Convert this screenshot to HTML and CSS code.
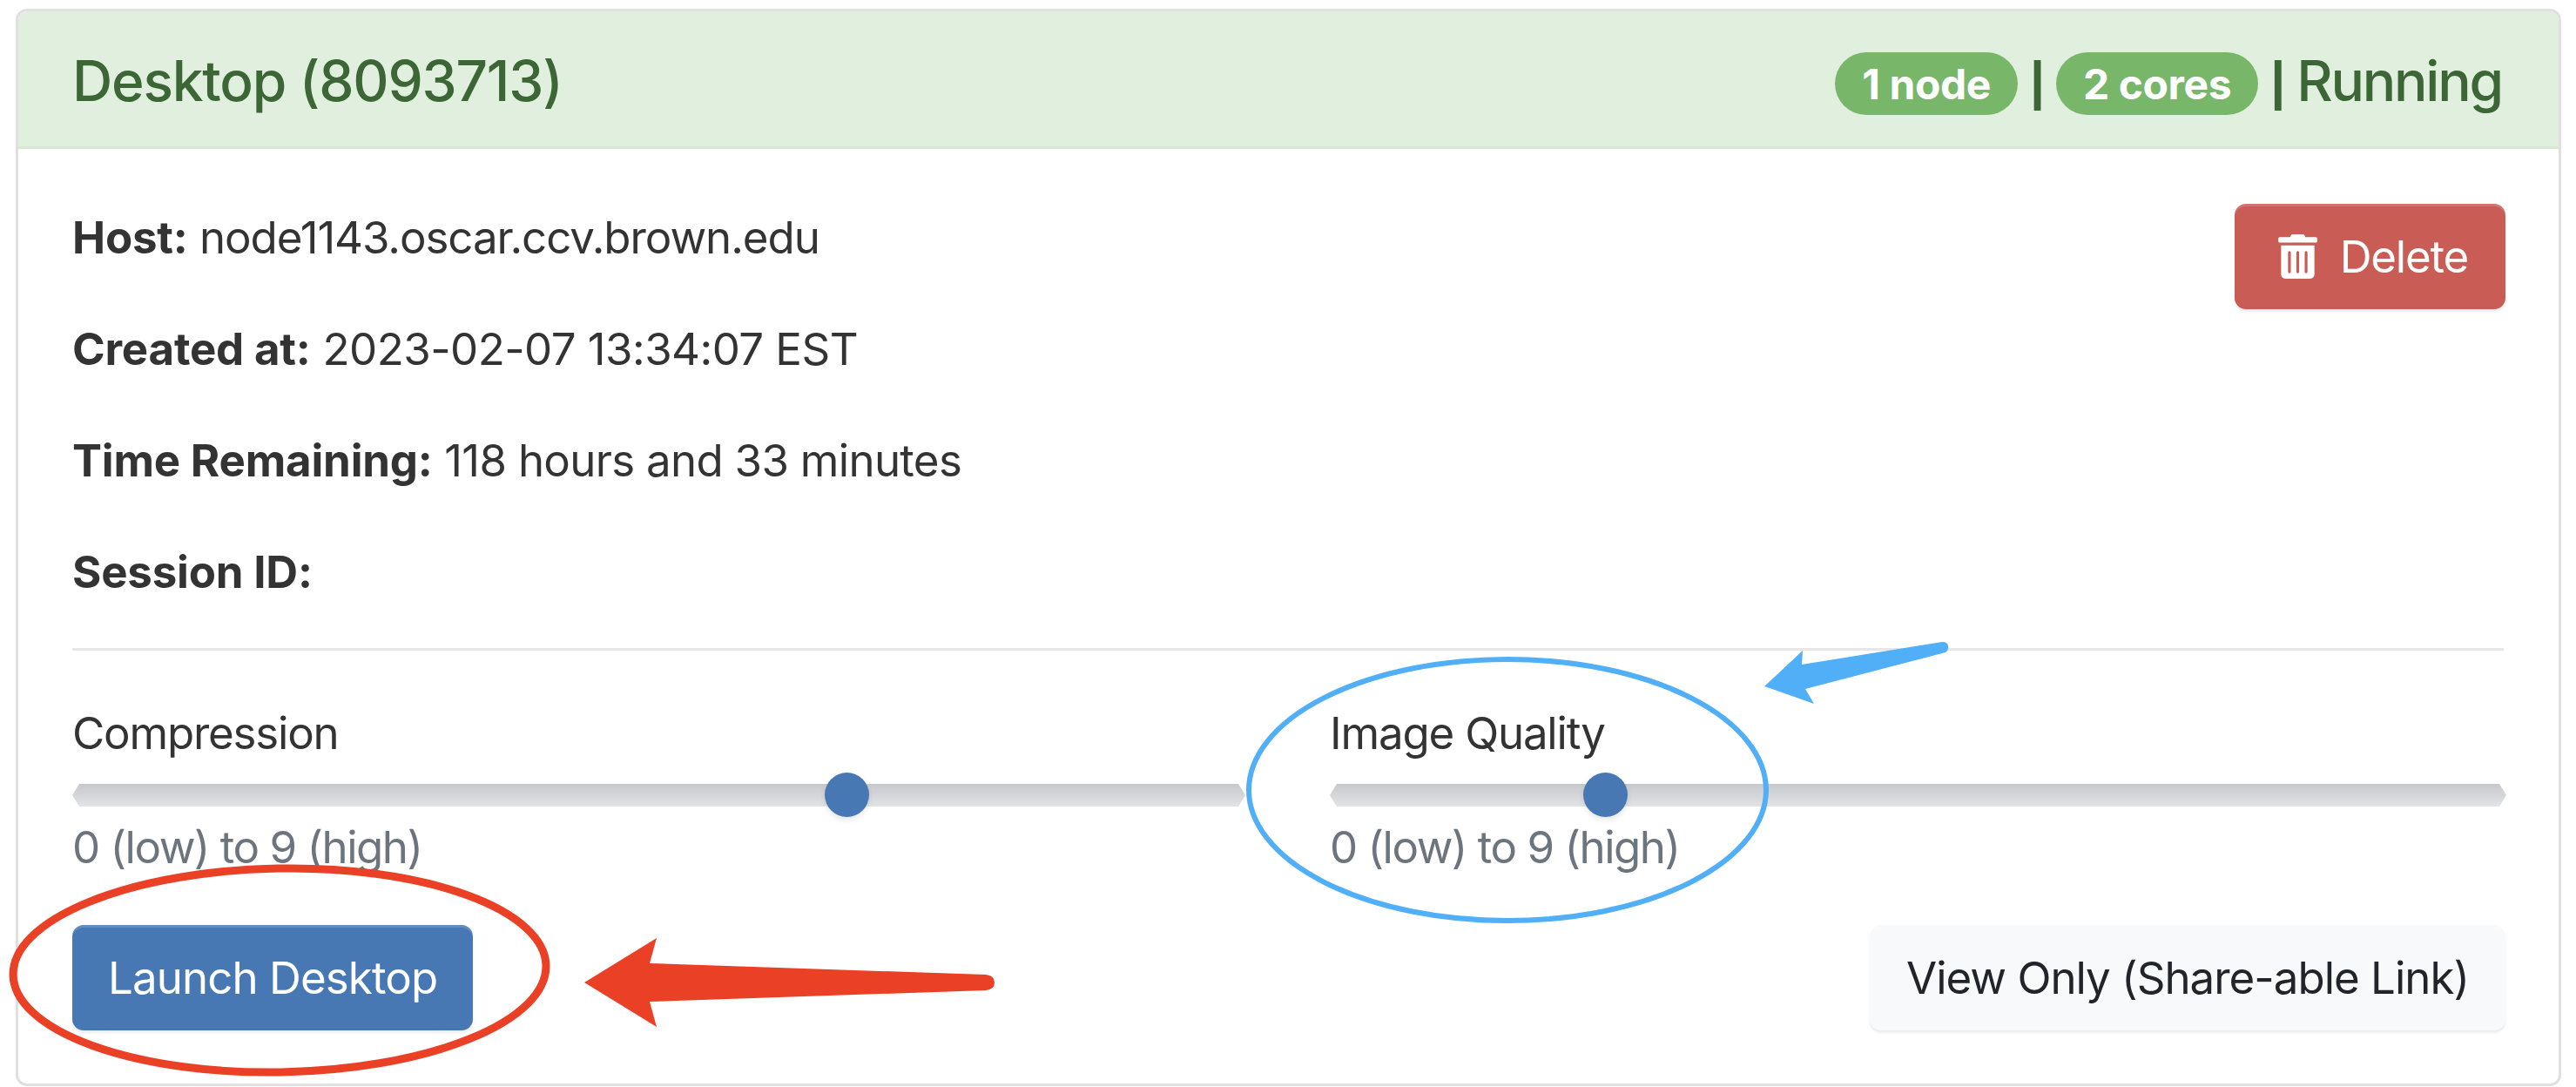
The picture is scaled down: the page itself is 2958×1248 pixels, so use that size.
FILE: index.html
```html
<!DOCTYPE html>
<html lang="en">
<head>
    <meta charset="UTF-8">
    <meta name="viewport" content="width=device-width, initial-scale=1.0">
    <title>Desktop session</title>
    <link rel="stylesheet" href="styles.css">
</head>
<body>
    <div class="card">
        <div class="card-header">
            <div class="session-title">Desktop (8093713)</div>
            <div class="session-status">
                <span class="badge">1 node</span>
                <span class="sep">|</span>
                <span class="badge">2 cores</span>
                <span class="sep">|</span>
                <span class="state">Running</span>
            </div>
        </div>

        <div class="card-body">
            <div class="info-row">
                <div class="info-list">
                    <p class="info-host"><strong>Host:</strong> node1143.oscar.ccv.brown.edu</p>
                    <p class="info-date"><strong>Created at:</strong> 2023-02-07 13:34:07 EST</p>
                    <p><strong>Time Remaining:</strong> 118 hours and 33 minutes</p>
                    <p><strong>Session ID:</strong></p>
                </div>
                <button class="btn btn-delete">
                    <svg class="trash-icon" viewBox="0 0 448 512"><path fill="currentColor" d="M32 464a48 48 0 0 0 48 48h288a48 48 0 0 0 48-48V128H32zm272-256a16 16 0 0 1 32 0v224a16 16 0 0 1-32 0zm-96 0a16 16 0 0 1 32 0v224a16 16 0 0 1-32 0zm-96 0a16 16 0 0 1 32 0v224a16 16 0 0 1-32 0zM432 32H312l-9.4-18.7A24 24 0 0 0 281.1 0H166.8a23.72 23.72 0 0 0-21.4 13.3L136 32H16A16 16 0 0 0 0 48v32a16 16 0 0 0 16 16h416a16 16 0 0 0 16-16V48a16 16 0 0 0-16-16z"/></svg>
                    Delete
                </button>
            </div>

            <hr class="divider">

            <div class="sliders">
                <div class="slider-group">
                    <label class="slider-label">Compression</label>
                    <div class="track"><span class="thumb" style="left: 66%"></span></div>
                    <div class="hint">0 (low) to 9 (high)</div>
                </div>
                <div class="slider-group">
                    <label class="slider-label">Image Quality</label>
                    <div class="track"><span class="thumb" style="left: 23.4%"></span></div>
                    <div class="hint">0 (low) to 9 (high)</div>
                </div>
            </div>

            <div class="actions">
                <button class="btn btn-launch">Launch Desktop</button>
                <button class="btn btn-view">View Only (Share-able Link)</button>
            </div>
        </div>
    </div>

    <!-- Hand drawn annotations on top of the screenshot -->
    <svg class="annotations" viewBox="0 0 2958 1248">
        <ellipse cx="321" cy="1114" rx="306" ry="117" fill="none" stroke="#ea4126" stroke-width="9" transform="rotate(-1 321 1114)"/>
        <path fill="#ea4126" d="M671 1128 L754 1077 L746 1106 L1132 1119 Q1142 1120 1142 1128 Q1142 1136 1132 1137 L746 1150 L754 1179 Z"/>
        <ellipse cx="1731" cy="907" rx="297" ry="150" fill="none" stroke="#51aff7" stroke-width="6"/>
        <path fill="#51aff7" d="M2026 788 L2070 747 L2069 763 L2230 737 Q2238 737 2237 744 Q2237 747 2234 749 L2073 791 L2083 808 Z"/>
    </svg>
</body>
</html>
```

FILE: styles.css
```css
body {
    font-family: Inter, "Liberation Sans", sans-serif;
    font-size: 51px;
    line-height: 77px;
    letter-spacing: -0.7px;
    color: #333;
    margin: 0;
    padding: 10px 17px 0 18px;
    background-color: #fff;
    overflow: hidden;
}

strong {
    letter-spacing: -0.2px;
}

.card {
    border: 3px solid #e0e0e0;
    border-radius: 13px;
    overflow: hidden;
    background-color: #fff;
}

.card-header {
    height: 152px;
    padding: 3px 65px 0 62px;
    display: flex;
    justify-content: space-between;
    align-items: center;
    background-color: #e1efdf;
    border-bottom: 3px solid #d8e8d5;
    color: #3d6636;
    font-size: 64px;
    font-weight: 500;
    letter-spacing: -1.2px;
}

.session-status {
    display: flex;
    align-items: center;
    gap: 14px;
}

.badge {
    height: 72px;
    margin-top: 8px;
    padding: 0 31px;
    display: flex;
    align-items: center;
    border-radius: 36px;
    background-color: #78b76a;
    color: #fff;
    font-size: 48px;
    font-weight: 700;
    letter-spacing: -0.4px;
}

.sep {
    font-family: "Liberation Sans", sans-serif;
    font-size: 61px;
    font-weight: 700;
}

.state {
    letter-spacing: -2.2px;
}

.card-body {
    padding: 63px 61px 61px 62px;
}

.info-row {
    display: flex;
    justify-content: space-between;
    align-items: flex-start;
}

.info-list p {
    margin: 0 0 51px;
}

.info-list p:last-child {
    margin-bottom: 49px;
}

.info-list .info-host {
    letter-spacing: -1.05px;
}

.info-list .info-date {
    letter-spacing: -0.55px;
}

.btn {
    height: 121px;
    border: none;
    border-radius: 13px;
    font-family: inherit;
    font-size: 51px;
    letter-spacing: -1.2px;
    cursor: pointer;
    box-shadow: inset 0 3px 0 rgba(255, 255, 255, 0.15), 0 3px 3px rgba(0, 0, 0, 0.075);
}

.btn-delete {
    padding: 0 43px 0 50px;
    display: flex;
    align-items: center;
    gap: 26px;
    background-color: #c95c55;
    color: #fff;
}

.trash-icon {
    width: 45px;
    height: 51px;
}

.divider {
    margin: 0 2px 56px 0;
    border: none;
    border-top: 3px solid #e6e6e6;
}

.sliders {
    display: grid;
    grid-template-columns: 1347px 1351px;
    column-gap: 97px;
    letter-spacing: -1.2px;
}

.track {
    position: relative;
    height: 26px;
    margin: 20px 0 8px;
}

/* chamfered ends, the thumb must not get clipped so the bar is its own layer */
.track::before {
    content: "";
    position: absolute;
    inset: 0;
    background: linear-gradient(#c6c8cc, #e2e4e7);
    clip-path: polygon(0 50%, 8px 0, calc(100% - 8px) 0, 100% 50%, calc(100% - 8px) 100%, 8px 100%);
}

.thumb {
    position: absolute;
    top: -13px;
    width: 51px;
    height: 51px;
    margin-left: -25px;
    border-radius: 50%;
    background-color: #4778b3;
    box-shadow: 0 3px 6px rgba(0, 0, 0, 0.1);
}

.hint {
    color: #6c757d;
    letter-spacing: -1.5px;
}

.actions {
    margin-top: 51px;
    display: flex;
    justify-content: space-between;
}

.btn-launch {
    padding: 0 41px;
    background-color: #4778b3;
    color: #fff;
    letter-spacing: -0.9px;
}

.btn-view {
    padding: 0 42px;
    background-color: #f8f9fa;
    color: #212529;
    letter-spacing: -1px;
}

.annotations {
    position: absolute;
    left: 0;
    top: 0;
    width: 2958px;
    height: 1248px;
    pointer-events: none;
}
```
